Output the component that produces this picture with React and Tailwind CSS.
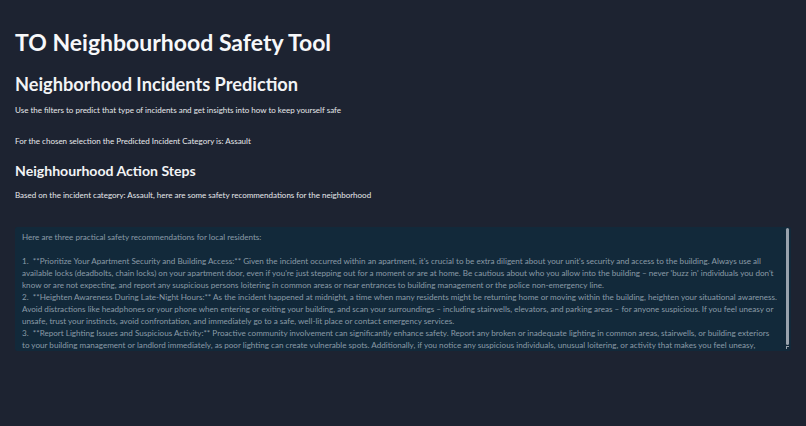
// the text box shows the recommendations with the line breaks of a fixed-width textarea
const recLines = [
    "Here are three practical safety recommendations for local residents:",
    "",
    "1.  **Prioritize Your Apartment Security and Building Access:** Given the incident occurred within an apartment, it's crucial to be extra diligent about your unit's security and access to the building. Always use all",
    "available locks (deadbolts, chain locks) on your apartment door, even if you're just stepping out for a moment or are at home. Be cautious about who you allow into the building – never 'buzz in' individuals you don't",
    "know or are not expecting, and report any suspicious persons loitering in common areas or near entrances to building management or the police non-emergency line.",
    "2.  **Heighten Awareness During Late-Night Hours:** As the incident happened at midnight, a time when many residents might be returning home or moving within the building, heighten your situational awareness.",
    "Avoid distractions like headphones or your phone when entering or exiting your building, and scan your surroundings – including stairwells, elevators, and parking areas – for anyone suspicious. If you feel uneasy or",
    "unsafe, trust your instincts, avoid confrontation, and immediately go to a safe, well-lit place or contact emergency services.",
    "3.  **Report Lighting Issues and Suspicious Activity:** Proactive community involvement can significantly enhance safety. Report any broken or inadequate lighting in common areas, stairwells, or building exteriors",
    "to your building management or landlord immediately, as poor lighting can create vulnerable spots. Additionally, if you notice any suspicious individuals, unusual loitering, or activity that makes you feel uneasy,",
    "don't hesitate to contact the police non-emergency line or 911 if there is an immediate threat.",
];

export default function App() {
    return (
        <div className="min-h-screen bg-[#1d2331] text-white font-['Source_Sans_Pro','Lato',sans-serif]">
            <div className="px-[15px] pt-[26px]">
                <h1 className="text-[23px] font-bold leading-[32px] text-[#f7f8fa]">
                    TO Neighbourhood Safety Tool
                </h1>

                <h2 className="mt-[14px] text-[18.2px] font-bold leading-[24px] text-[#f2f3f5]">
                    Neighborhood Incidents Prediction
                </h2>
                <p className="mt-[8px] text-[8px] leading-[12px] text-[#e6e8eb]">
                    Use the filters to predict that type of incidents and get insights into how to keep yourself safe
                </p>

                <p className="mt-[19px] text-[8px] leading-[12px] text-[#e6e8eb]">
                    For the chosen selection the Predicted Incident Category is: Assault
                </p>

                <h3 className="mt-[14px] text-[14.1px] font-bold leading-[20px] text-[#f2f3f5]">
                    Neighhourhood Action Steps
                </h3>
                <p className="mt-[8px] text-[8px] leading-[12px] text-[#e6e8eb]">
                    Based on the incident category: Assault, here are some safety recommendations for the neighborhood
                </p>

                <div className="relative mt-[26px] h-[124px] overflow-hidden rounded-[2px] bg-[#12293a]">
                    <div className="h-full overflow-hidden whitespace-pre pl-[7px] pr-[12px] pt-[4px] text-[8.1px] leading-[12px] text-[#8a9ba7]">
                        {recLines.map((line, i) =>
                            line ? (
                                <p key={i}>{line}</p>
                            ) : (
                                <div key={i} className="h-[12px]" />
                            )
                        )}
                    </div>
                    <div className="absolute right-[2px] top-[1px] h-[117px] w-[3px] rounded-full bg-[#9aa3ad]" />
                    <div className="absolute bottom-[2px] right-[2px] h-[3px] w-[3px] border-l border-t border-[#9aa3ad]" />
                </div>
            </div>
        </div>
    );
}
